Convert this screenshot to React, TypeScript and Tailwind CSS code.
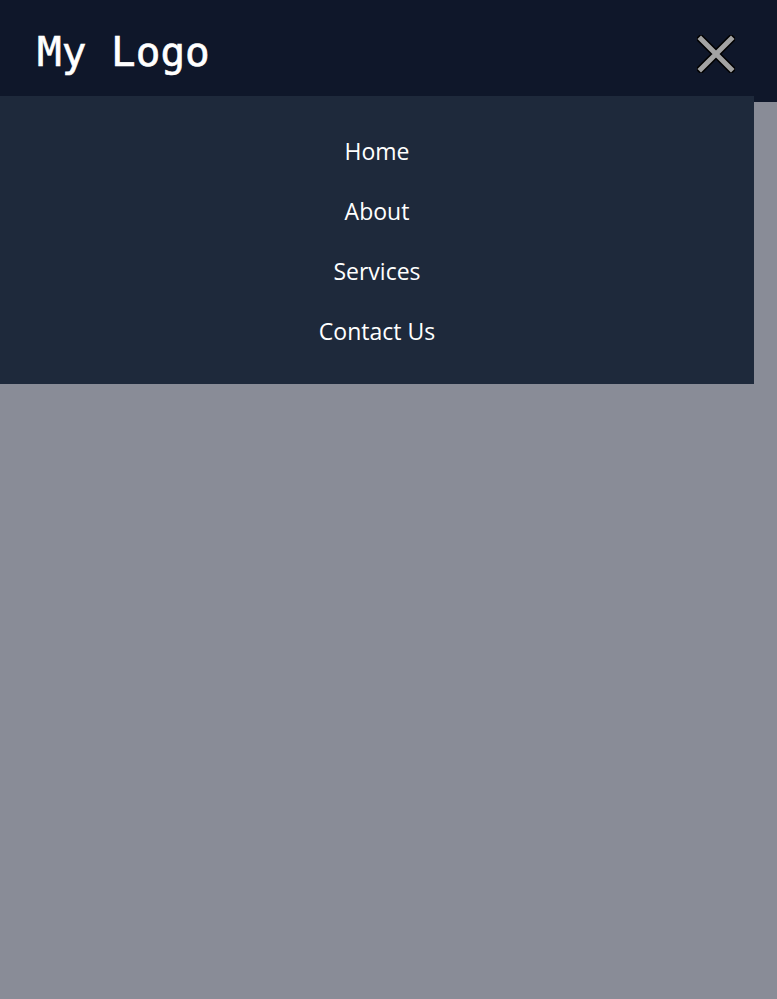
export default function App() {
  const links = ["Home", "About", "Services", "Contact Us"];
  return (
    <div className="relative min-h-[999px] w-full bg-[#898c97]">
      <header className="flex h-[102px] items-start justify-between bg-[#0f172a] px-[37px]">
        <span className="mt-[26px] font-['DejaVu_Sans_Mono',monospace] text-[41px] leading-[52px] text-white [-webkit-text-stroke:0.6px_white]">
          My Logo
        </span>
        <button className="mr-[5px] mt-[35px]" aria-label="Close menu">
          <svg width="38" height="38" viewBox="0 0 38 38">
            <path d="M4 4L34 34M34 4L4 34" stroke="#000" strokeWidth="8" strokeLinecap="square" />
            <path d="M4 4L34 34M34 4L4 34" stroke="#a3a3a3" strokeWidth="5" strokeLinecap="square" />
          </svg>
        </button>
      </header>
      <nav className="absolute left-0 top-[96px] w-[754px] bg-[#1e293b] pb-[29px] pt-[31px]">
        <ul className="flex flex-col gap-3">
          {links.map((l) => (
            <li key={l} className="flex h-12 items-center justify-center">
              <a href="#" className="font-['Open_Sans',sans-serif] text-[23px] text-white">
                {l}
              </a>
            </li>
          ))}
        </ul>
      </nav>
    </div>
  );
}
